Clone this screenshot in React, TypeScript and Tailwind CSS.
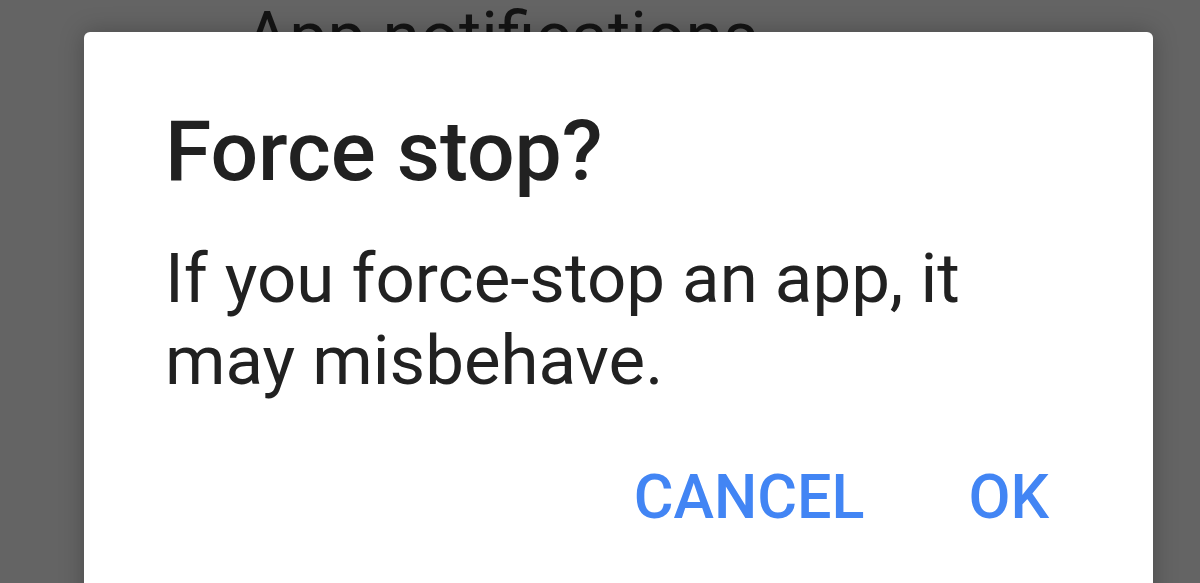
const roboto = { fontFamily: "Roboto, 'Noto Sans', sans-serif" };

export default function App() {
  return (
    <div
      className="relative h-[583px] w-[1200px] overflow-hidden bg-[#646464]"
      style={roboto}
    >
      {/* page behind the scrim */}
      <div className="pl-[245px] pt-[3px]">
        <h2 className="text-[68px] leading-none font-normal text-[#141414]">
          App notifications
        </h2>
      </div>

      {/* Dialog */}
      <div className="absolute left-[84px] top-[32px] flex h-[620px] w-[1069px] flex-col rounded-[6px] bg-white pl-[81px] pr-[74px] pt-[78px] shadow-[0_0_24px_rgba(0,0,0,0.25)]">
        <h1 className="text-[84px] leading-none font-medium text-[#212121]">
          Force stop?
        </h1>
        <p className="mt-[44px] text-[69px] leading-[82px] text-[#212121]">
          If you force-stop an app, it may misbehave.
        </p>
        <div className="mt-[65px] flex justify-end gap-[104px] pr-[30px]">
          <button className="text-[61px] leading-none font-medium text-[#4285f4]">
            CANCEL
          </button>
          <button className="text-[61px] leading-none font-medium text-[#4285f4]">
            OK
          </button>
        </div>
      </div>
    </div>
  );
}
